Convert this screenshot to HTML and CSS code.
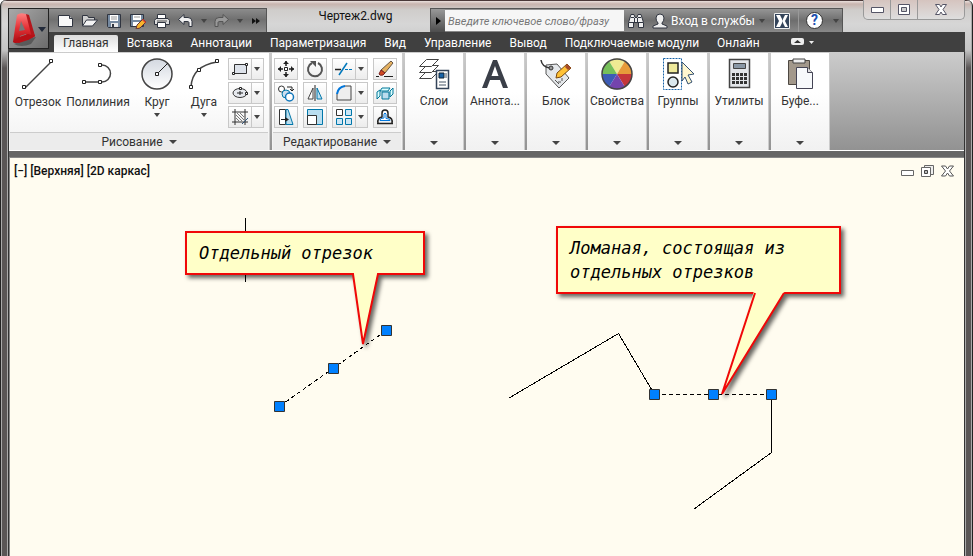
FILE: index.html
```
<!DOCTYPE html>
<html lang="ru">
<head>
    <meta charset="utf-8">
    <title>Чертеж2.dwg</title>
    <link rel="stylesheet" href="styles.css">
</head>
<body>
<div class="window">
    <!-- Title bar, application menu and tabs -->
    <header class="top">
        <button class="app-button" aria-label="Меню приложения">
            <svg width="39" height="38" viewBox="0 0 39 38">
                <defs>
                    <linearGradient id="red" x1="0" y1="0" x2="0" y2="1"><stop offset="0" stop-color="#ff8080"/><stop offset=".5" stop-color="#e33035"/><stop offset="1" stop-color="#a80c12"/></linearGradient>
                </defs>
                <path d="M5 34L16 29L27 27L22 34Q12 38 5 34Z" fill="#333" opacity=".5"/>
                <path d="M8 5Q11 2 17 4L26 26L19 30L17 24L11 26L10 32Q6 34 4 32Z" fill="url(#red)"/>
                <path d="M12 11L16 20L10 21Z" fill="#777"/>
                <path d="M17 4L20 5L26 26L23 28Z" fill="#b5161b"/>
                <path d="M4 32L10 27L19 24L26 26L19 30L10 33Z" fill="#b81016"/>
                <path d="M29 17h8l-4 5z" fill="#222a3a"/>
            </svg>
        </button>
        <div class="titlebar">
            <div class="quick-access">
                <button class="tool" aria-label="Создать"><svg width="18" height="16"><path d="M1.500 2.500h11l3 3v8h-14z" fill="#f8f8f8" stroke="#303540"/><path d="M12.500 2.500v3h3" fill="#bbb" stroke="#303540"/></svg></button>
                <button class="tool" aria-label="Открыть"><svg width="18" height="16"><path d="M1.500 13V2.500h5l1 2h6v3" fill="#d0d0d0" stroke="#303540"/><path d="M1.500 13l4-6h11l-5 6z" fill="#f4f4f4" stroke="#303540"/></svg></button>
                <button class="tool" aria-label="Сохранить"><svg width="16" height="16"><path d="M1.500 1.500h13v13h-12l-1-1z" fill="#7589a0" stroke="#303540"/><path d="M4 2h8v6H4z" fill="#fff"/><path d="M5 4h6M5 6h6" stroke="#999"/><path d="M5 10h7v4H5z" fill="#e8e8e8"/><path d="M6 11h2v3H6z" fill="#303540"/></svg></button>
                <button class="tool" aria-label="Сохранить как"><svg width="18" height="16"><path d="M1.500 1.500h13v12h-13z" fill="#7589a0" stroke="#303540"/><path d="M4 2h8v5H4zM4 9h6v4H4z" fill="#fff"/><path d="M5 4h6" stroke="#999"/><path d="M14 6l3 3-6 6-4 1 1-4z" fill="#f7b42c" stroke="#633"/><path d="M14 6l3 3-1 1-3-3z" fill="#d43"/></svg></button>
                <button class="tool" aria-label="Печать"><svg width="18" height="16"><path d="M4.500 6V1.500h8V6" fill="#fff" stroke="#303540"/><path d="M3 5.500h12l1.500 2v4h-15v-4z" fill="#ddd" stroke="#303540"/><path d="M4 8h10" stroke="#555"/><path d="M4.500 9.500h8v5h-8z" fill="#fff" stroke="#303540"/></svg></button>
                <button class="tool" aria-label="Отменить"><svg width="18" height="16"><path d="M1.500 6.500L7 1.500v3h4q4 0 4 4v5h-3v-4q0-1-2-1H7v3z" fill="#f0f0f0" stroke="#303540"/></svg></button>
                <button class="drop" aria-label="Список отмены"><svg width="6" height="4"><path d="M0 0h6l-3 4z" fill="#444"/></svg></button>
                <button class="tool" aria-label="Повторить"><svg width="18" height="16"><path d="M15.500 6.500L10 1.500v3H6q-4 0-4 4v5h3v-4q0-1 2-1h3v3z" fill="#999" stroke="#555"/></svg></button>
                <button class="drop" aria-label="Список повтора"><svg width="6" height="4"><path d="M0 0h6l-3 4z" fill="#444"/></svg></button>
                <button class="more" aria-label="Еще"><svg width="8" height="6"><path d="M0 0l4 3-4 3zM4 0l4 3-4 3z" fill="#111"/></svg></button>
            </div>
            <h1 class="doc-name">Чертеж2.dwg</h1>
            <form class="info-center">
                <button class="expand" type="button" aria-label="Развернуть"><svg width="5" height="8"><path d="M0 0l5 4-5 4z" fill="#000"/></svg></button>
                <input class="search" type="text" aria-label="Поиск" placeholder="Введите ключевое слово/фразу">
                <button class="tool" type="button" aria-label="Найти"><svg width="18" height="18"><path d="M4 2.500h3l1 3h2l1-3h3l2.500 8v5h-5v-5h-5v5h-5v-5z" fill="#eee" stroke="#303540"/><path d="M2 10.500h5M11 10.500h5M7.500 6v5M10.500 6v5M4 5.500h3M11 5.500h3" stroke="#303540"/></svg></button>
                <button class="tool" type="button" aria-label="Пользователь"><svg width="18" height="18"><path d="M9 2q4 0 4 4 0 3-2 5v1l5 2v2H2v-2l5-2v-1Q5 9 5 6q0-4 4-4z" fill="#eee" stroke="#303540"/></svg></button>
                <button class="sign-in" type="button">Вход в службы</button>
                <button class="drop wide" type="button" aria-label="Вход"><svg width="6" height="4"><path d="M0 0h6l-3 4z" fill="#444"/></svg></button>
                <button class="tool exchange" type="button" aria-label="Exchange"><svg width="18" height="18"><path d="M1.500 1.500h15v15h-15z" fill="#34445a" stroke="#eee"/><path d="M3 3h4l3 6-3 6H3l3-6zM15 3h-3l-2 4v4l2 4h3l-3-6z" fill="#fff"/></svg></button>
                <button class="tool help" type="button" aria-label="Справка"><span class="help-mark">?</span></button>
                <button class="drop" type="button" aria-label="Меню справки"><svg width="6" height="4"><path d="M0 0h6l-3 4z" fill="#444"/></svg></button>
            </form>
            <div class="win-controls">
                <button aria-label="Свернуть"><svg width="13" height="6"><path d="M.5.5h12v5H.5z" fill="#fff" stroke="#556"/></svg></button>
                <button aria-label="Развернуть окно"><svg width="12" height="11"><path d="M.5.5h11v10H.5z" fill="#fff" stroke="#556"/><path d="M3.500 3.500h5v4h-5z" fill="#ccc" stroke="#556"/></svg></button>
                <button class="close" aria-label="Закрыть"><svg width="12" height="11"><path d="M.5.5h4L6 3 7.500.5h4l-3.500 5 3.500 5h-4L6 8l-1.500 2.500h-4L4 5.500z" fill="#fff" stroke="#556"/></svg></button>
            </div>
        </div>
        <nav class="tabs">
            <a class="tab active" href="#">Главная</a>
            <a class="tab" href="#">Вставка</a>
            <a class="tab" href="#">Аннотации</a>
            <a class="tab" href="#">Параметризация</a>
            <a class="tab" href="#">Вид</a>
            <a class="tab" href="#">Управление</a>
            <a class="tab" href="#">Вывод</a>
            <a class="tab" href="#">Подключаемые модули</a>
            <a class="tab" href="#">Онлайн</a>
            <button class="minimize" aria-label="Свернуть ленту"><svg width="24" height="8"><rect x="0" y="0" width="13" height="7" rx="2" fill="#eee"/><path d="M3 5h7L6.500 2z" fill="#333"/><path d="M18 3h5l-2.500 3z" fill="#eee"/></svg></button>
        </nav>
    </header>

    <!-- Ribbon -->
    <main class="work">
        <div class="ribbon">
            <section class="panel">
                <div class="panel-body">
                    <button class="big line-tool"><svg width="32" height="32"><path d="M3 30L29 4" stroke="#444" stroke-width="1.500"/><path d="M.5 27.500h3v3h-3zM27.500 1.500h3v3h-3z" fill="#fff" stroke="#222"/></svg>Отрезок</button>
                    <button class="big poly-tool"><svg width="32" height="32"><path d="M2 24h16h2a8 8 0 0 0 0-17h-2" fill="none" stroke="#444" stroke-width="1.500"/><path d="M.5 22.500h3v3h-3zM16.500 22.500h3v3h-3zM16.500 5.500h3v3h-3z" fill="#fff" stroke="#222"/></svg>Полилиния</button>
                    <button class="big circle-tool"><svg width="32" height="32"><defs><linearGradient id="disc" x1="0" y1="0" x2="0" y2="1"><stop offset="0" stop-color="#d3d8e0"/><stop offset="1" stop-color="#fff"/></linearGradient></defs><circle cx="16" cy="16" r="15" fill="url(#disc)" stroke="#444" stroke-width="1.500"/><path d="M16 16L27 5" stroke="#222"/><path d="M14.500 14.500h3v3h-3z" fill="#fff" stroke="#222"/></svg>Круг<svg class="arrow" width="6" height="4"><path d="M0 0h6l-3 4z" fill="#444"/></svg></button>
                    <button class="big arc-tool"><svg width="32" height="32"><path d="M3 29Q4 8 29 4" fill="none" stroke="#444" stroke-width="1.500"/><path d="M1.500 27.500h3v3h-3zM9.500 10.500h3v3h-3zM27.500 1.500h3v3h-3z" fill="#fff" stroke="#222"/></svg>Дуга<svg class="arrow" width="6" height="4"><path d="M0 0h6l-3 4z" fill="#444"/></svg></button>
                    <div class="draw-tools">
                        <button class="small split" aria-label="Прямоугольник"><svg width="18" height="18"><path d="M3.500 4.500h12v9h-12z" fill="#dde2ea" stroke="#333"/><path d="M1.500 12.500h2v2h-2zM14.500 3.500h2v2h-2z" fill="#fff" stroke="#222"/></svg><i class="caret"></i></button>
                        <button class="small split" aria-label="Эллипс"><svg width="18" height="18"><ellipse cx="9" cy="9" rx="7" ry="4.500" fill="#e6e9ee" stroke="#333"/><path d="M6 9h6M9 7v4" stroke="#222"/><path d="M8.500 3.500h2v2h-2zM14.500 8.500h2v2h-2z" fill="#fff" stroke="#222"/></svg><i class="caret"></i></button>
                        <button class="small split" aria-label="Штриховка"><svg width="18" height="18"><path d="M4 1v16M14 1v16M1 4h16M1 14h16" stroke="#333"/><path d="M5 10l3 3M5 7l6 6M6 5l7 7M9 5l4 4" stroke="#777"/><path d="M11 16l6-6" stroke="#357" /></svg><i class="caret"></i></button>
                    </div>
                </div>
                <button class="panel-title">Рисование<i class="caret large"></i></button>
            </section>

            <section class="panel edit-panel">
                <div class="panel-body edit-tools">
                    <button class="small" aria-label="Перенести"><svg width="18" height="18"><path d="M9 1v5M9 12v5M1 9h5M12 9h5" stroke="#222" stroke-width="1.500"/><path d="M6 4l3-3 3 3zM6 14l3 3 3-3zM4 6L1 9l3 3zM14 6l3 3-3 3z" fill="#222"/><path d="M7.500 7.500h3v3h-3z" fill="#fff" stroke="#222"/></svg></button>
                    <button class="small" aria-label="Повернуть"><svg width="18" height="18"><path d="M6 3a7 7 0 1 0 6 0" fill="none" stroke="#555" stroke-width="2"/><path d="M4 1h6v6z" fill="#555"/></svg></button>
                    <button class="small split" aria-label="Обрезать"><svg width="18" height="18"><path d="M0 9.500h6" stroke="#222" stroke-width="1.500"/><path d="M10 9.500h8" stroke="#07b" stroke-dasharray="3 1"/><path d="M4 15l8-12" stroke="#07b" stroke-width="1.500"/></svg><i class="caret"></i></button>
                    <button class="small" aria-label="Стереть"><svg width="18" height="18"><path d="M0 16.500h3M8 16.500h9" stroke="#222"/><path d="M15 1l2 2-8 10-4-3z" fill="#e5b160" stroke="#654"/><path d="M5 10l4 3-2 2q-3 1-4-1z" fill="#d34a22" stroke="#722"/></svg></button>

                    <button class="small" aria-label="Копировать"><svg width="18" height="18"><circle cx="4.500" cy="5" r="3" fill="#fff" stroke="#333"/><circle cx="9" cy="10" r="4" fill="#cde" stroke="#07a"/><circle cx="12.500" cy="13" r="4" fill="#fff" stroke="#17b" stroke-width="1.500"/><path d="M10 3h5v4M13 5l2 2 2-2" fill="none" stroke="#222"/></svg></button>
                    <button class="small" aria-label="Зеркало"><svg width="18" height="18"><path d="M7 4v11H2z" fill="#fff" stroke="#444"/><path d="M11 4v11h5z" fill="#bde" stroke="#07a"/><path d="M9 1v16" stroke="#222"/></svg></button>
                    <button class="small split" aria-label="Сопряжение"><svg width="18" height="18"><path d="M2 16V10Q3 3 10 2h6v14z" fill="#eee" stroke="#444"/><path d="M2 10Q3 3 10 2" fill="none" stroke="#07d" stroke-width="2"/></svg><i class="caret"></i></button>
                    <button class="small" aria-label="Расчленить"><svg width="18" height="18"><path d="M6 8h7v7H6z" fill="#bde" stroke="#079"/><path d="M6 4h8l-2 3H4zM14 7l3-3v6l-3 3z" fill="#dff" stroke="#079"/><path d="M1 8l3-2v6l-3 3z" fill="#dff" stroke="#079"/></svg></button>

                    <button class="small" aria-label="Растянуть"><svg width="18" height="18"><path d="M2.500 1.500h6v15h-6z" fill="#fff" stroke="#333"/><path d="M9 1.500h2l5 15H9z" fill="#bde" stroke="#07a"/><path d="M4 11.500h5" stroke="#222"/><path d="M8 9l4 2.500L8 14z" fill="#222"/></svg></button>
                    <button class="small" aria-label="Масштаб"><svg width="18" height="18"><path d="M1.500 1.500h15v15h-15z" fill="#b9def0" stroke="#07a"/><path d="M1.500 7.500h9v9h-9z" fill="#fff" stroke="#333"/></svg></button>
                    <button class="small split" aria-label="Массив"><svg width="18" height="18"><path d="M1.500 1.500h6v6h-6z" fill="#fff" stroke="#333"/><path d="M10.500 1.500h6v6h-6zM1.500 10.500h6v6h-6zM10.500 10.500h6v6h-6z" fill="#cde6f5" stroke="#07a"/></svg><i class="caret"></i></button>
                    <button class="small" aria-label="Смещение"><svg width="18" height="18"><path d="M6 15.500H1M2 15q-1-5 4-6V5q0-3 3-3t3 3v4q5 1 4 6M1 15.500h16" fill="none" stroke="#222" stroke-width="1.500"/><path d="M4 12.500h10q0-2-4-2V6q-1-2-2 0v4q-4 0-4 2z" fill="#fff" stroke="#07d"/></svg></button>
                </div>
                <button class="panel-title">Редактирование<i class="caret large"></i></button>
            </section>

            <button class="panel slim"><svg width="32" height="32"><g fill="#fff" stroke="#444"><path d="M1.500 20.500l7-7h12l-7 7z"/><path d="M1.500 14.500l7-7h12l-7 7z"/><path d="M1.500 8.500l7-7h12l-7 7z"/><path d="M18.500 12.500h12v18h-12z" stroke="#34445a" stroke-width="1.500"/></g><path d="M21 15h5v5h-5z" fill="#1763a8" stroke="#123"/><path d="M28 15v5M21 24h7M21 27h7" stroke="#456"/></svg><span>Слои</span><i class="caret large"></i></button>
            <button class="panel slim"><svg width="32" height="32"><path d="M3 30L14 2h4l11 28h-5l-3-8H11l-3 8zM12.500 18h7L16 8z" fill="#3a3f48"/></svg><span>Аннота...</span><i class="caret large"></i></button>
            <button class="panel slim"><svg width="32" height="32"><path d="M6 7l11-1 12 14-10 10L6 16z" fill="#e5e8eb" stroke="#555"/><path d="M1 2q1 7 9 8" fill="none" stroke="#333" stroke-width="1.500"/><circle cx="11" cy="10" r="2" fill="#999" stroke="#333"/><path d="M15 22l4 4M18 24h3M22 20v3" stroke="#555"/><path d="M27 6l4 4-10 9-5 1 1-5z" fill="#ffc236" stroke="#7a4a10"/><path d="M27 6l4 4-3 2-3-3z" fill="#a54b2a"/></svg><span>Блок</span><i class="caret large"></i></button>
            <button class="panel slim"><svg width="32" height="32"><path d="M16 16L8 3a15 15 0 0 1 16 0z" fill="#efea93"/><path d="M16 16l8-13a15 15 0 0 1 7 13z" fill="#e79b3a"/><path d="M16 16h15a15 15 0 0 1-7 13z" fill="#c5353a"/><path d="M16 16l8 13a15 15 0 0 1-16 0z" fill="#7444ad"/><path d="M16 16L8 29a15 15 0 0 1-7-13z" fill="#3c5cb6"/><path d="M16 16H1A15 15 0 0 1 8 3z" fill="#76bf5a"/><circle cx="16" cy="16" r="15" fill="none" stroke="#444" stroke-width="1.500"/></svg><span>Свойства</span><i class="caret large"></i></button>
            <button class="panel slim"><svg width="34" height="32"><path d="M2.500.5h18v31h-18z" fill="none" stroke="#1763a8" stroke-dasharray="2 1"/><path d="M7 5h10v10H7z" fill="#efe99a" stroke="#222" stroke-width="1.500"/><circle cx="12" cy="24" r="5" fill="#dbe8ee" stroke="#222" stroke-width="1.500"/><path d="M21 4l12 12-6 1 4 7-4 2-3-7-3 4z" fill="#fff7cf" stroke="#335070"/></svg><span>Группы</span><i class="caret large"></i></button>
            <button class="panel slim"><svg width="32" height="32"><path d="M6.500 1.500h20v28h-20z" fill="#e3e6ea" stroke="#444" stroke-width="1.500"/><path d="M10.500 5.500h12v5h-12z" fill="#8997a5" stroke="#444"/><path d="M9 16.500h15M9 20.500h15M9 24.500h15" stroke="#333" stroke-width="3" stroke-dasharray="3 1"/></svg><span>Утилиты</span><i class="caret large"></i></button>
            <button class="panel slim"><svg width="32" height="32"><path d="M4.500 2.500h21v24h-21z" fill="#a2988b" stroke="#4d4842"/><path d="M9 1h12v4H9z" fill="#eee" stroke="#444"/><path d="M12.500 9.500h11l5 5v16h-16z" fill="#f7f9fb" stroke="#445"/><path d="M23.500 9.500v5h5" fill="#ddd" stroke="#445"/></svg><span>Буфе...</span><i class="caret large"></i></button>
        </div>

        <!-- Drawing area -->
        <section class="canvas">
            <div class="view-bar">
                <div class="view-label"><button>[&minus;]</button><button>[Верхняя]</button><button>[2D каркас]</button></div>
                <div class="view-controls">
                    <button aria-label="Свернуть вид"><svg width="13" height="12"><path d="M.5 5.500h12v5H.5z" fill="#fff" stroke="#666"/></svg></button>
                    <button aria-label="Развернуть вид"><svg width="13" height="12"><path d="M3.500.5h9v9h-9z" fill="#eee" stroke="#666"/><path d="M.5 2.500h9v9h-9z" fill="#fff" stroke="#666"/><path d="M3.500 5.500h3v3h-3z" fill="#bbb" stroke="#444"/></svg></button>
                    <button aria-label="Закрыть вид"><svg width="13" height="12"><path d="M.5 1h4l2 3 2-3h4l-4 5 4 5h-4l-2-3-2 3h-4l4-5z" fill="#fff" stroke="#555"/></svg></button>
                </div>
            </div>
            <svg class="drawing" width="953" height="398" viewBox="10 158 953 398">
                <g fill="none" stroke="#000" shape-rendering="crispEdges">
                    <path d="M245.500 218v64"/>
                    <path d="M509 398L618.500 333.500 654.500 394.500"/>
                    <path d="M771.500 394v58.500L694 509"/>
                    <path d="M280 406L387 330M655 394.500h117" stroke-dasharray="4 3"/>
                </g>
            </svg>
            <div class="callout callout-single">
                Отдельный отрезок
                <svg class="tail" width="40" height="75"><path d="M6 0L16 72 31 0z" fill="#ffffc8"/><path d="M5 2h1L16 72 31 2h1" fill="none" stroke="#f00808" stroke-width="2"/></svg>
            </div>
            <div class="callout callout-multi">
                Ломаная, состоящая из<br>отдельных отрезков
                <svg class="tail" width="72" height="106"><path d="M36 0L4 103 67 0z" fill="#ffffc8"/><path d="M37 2L4 103 66 2" fill="none" stroke="#f00808" stroke-width="2"/></svg>
            </div>
            <svg class="drawing" width="953" height="398" viewBox="10 158 953 398">
                <g fill="#0080ff" stroke="#333">
                    <path d="M274.500 401.500h10v10h-10zM328.500 363.500h10v10h-10zM381.500 325.500h10v10h-10z"/>
                    <path d="M649.500 389.500h10v10h-10zM708.500 389.500h10v10h-10zM766.500 389.500h10v10h-10z"/>
                </g>
            </svg>
        </section>
    </main>
</div>
</body>
</html>
```
FILE: styles.css
```
* {
    box-sizing: border-box;
}

body {
    margin: 0;
    font-family: Roboto, "Open Sans", sans-serif;
    font-size: 12px;
    color: #333;
}

button {
    font: inherit;
    color: inherit;
    background: none;
    border: none;
    padding: 0;
    display: flex;
    align-items: center;
    justify-content: center;
}

svg {
    display: block;
    flex: none;
}

/* Window frame */
.window {
    min-height: 100vh;
    display: flex;
    flex-direction: column;
    padding: 0 7px;
    background: linear-gradient(#4a3838 0, #4a3838 1px, #eadfdc 1px, #c8b4ae 4px, #cfcdcb 10px, #d6d6d6 24px, #c4c4c4 50px, #5a5656 68px);
    border-left: 1px solid #222;
    border-right: 1px solid #222;
    border-radius: 6px 6px 0 0;
    box-shadow: inset 1px 0 0 #aaa, inset -1px 0 0 #aaa;
}

/* Title bar */
.top {
    display: grid;
    grid-template-columns: 41px 1fr;
    grid-template-rows: 32px 20px;
}

.app-button {
    grid-row: 1 / 3;
    margin-top: 8px;
    height: 41px;
    border: 1px solid #222;
    background: linear-gradient(135deg, #a8a8a8, #8a8a8a 50%, #6c6c6c);
    z-index: 1;
}

.titlebar {
    display: flex;
    align-items: flex-start;
}

.quick-access {
    display: flex;
    height: 24px;
    margin-top: 8px;
    padding-left: 5px;
    border: 1px solid #555;
    border-width: 1px 1px 0 0;
    background: linear-gradient(#8c8c8c, #707070 45%, #8e8e8e);
}

.tool {
    width: 24px;
}

.drop {
    width: 12px;
}

.drop.wide {
    width: 16px;
}

.more {
    width: 20px;
}

.doc-name {
    flex: 1;
    margin: 8px 0 0;
    padding-left: 14px;
    font-size: 12px;
    font-weight: normal;
    line-height: 16px;
    text-align: center;
    white-space: nowrap;
    color: #111;
}

.info-center {
    display: flex;
    height: 24px;
    margin: 8px 20px 0 0;
    border: 1px solid #555;
    border-bottom: none;
    background: linear-gradient(#959595, #6e6e6e 50%, #888);
}

.expand {
    width: 14px;
    background: linear-gradient(#999, #4d4d4d);
}

.search {
    width: 179px;
    height: 21px;
    margin-top: 1px;
    border: none;
    background: #f6f6f6;
    padding: 2px 3px 0;
    font: italic 11px Roboto, "Open Sans", sans-serif;
}

.search::placeholder {
    color: #777;
}

.sign-in {
    width: 82px;
    color: #fff;
    white-space: nowrap;
}

.exchange {
    margin-right: 4px;
}

.help {
    border-left: 1px solid #999;
    width: 32px;
}

.help-mark {
    width: 17px;
    height: 17px;
    border: 1px solid #333;
    border-radius: 50%;
    background: #fff;
    color: #1c4fb0;
    font-size: 14px;
    font-weight: bold;
    line-height: 15px;
}

.win-controls {
    display: flex;
    height: 20px;
    border: 1px solid #999;
    border-top: none;
    border-radius: 0 0 5px 5px;
    background: linear-gradient(#d5c4bf, #dedede);
}

.win-controls button {
    width: 27px;
    border-right: 1px solid #999;
}

.win-controls .close {
    width: 46px;
    border-right: none;
}

/* Ribbon tabs */
.tabs {
    display: flex;
    margin-left: -41px;
    grid-column: 2;
    padding-left: 46px;
    background: #404040;
}

.tab {
    padding: 3px 9px 0;
    color: #fff;
    line-height: 16px;
    text-decoration: none;
    white-space: nowrap;
}

.tab.active {
    margin-top: 3px;
    padding-top: 0;
    border-radius: 2px 2px 0 0;
    background: linear-gradient(#dcdcdc, #fff);
    color: #333;
}

.minimize {
    margin-left: 22px;
}

/* Ribbon panels */
.work {
    flex: 1;
    display: flex;
    flex-direction: column;
    border-left: 1px solid #333;
    border-right: 1px solid #333;
    box-shadow: -1px 0 0 #aaa, 1px 0 0 #aaa;
}

.ribbon {
    display: flex;
    gap: 2px;
    height: 99px;
    padding-top: 1px;
    border-bottom: 1px solid #fff;
    background: linear-gradient(#ccc, #929292);
}

.panel {
    display: flex;
    flex-direction: column;
    background: linear-gradient(#fff 40%, #f1f1f1);
    border-right: 1px solid #ccc;
}

.panel-body {
    flex: 1;
    display: flex;
    padding: 5px 5px 0;
}

.panel-title {
    height: 18px;
    margin: 0 1px;
    gap: 6px;
    border-top: 1px solid #ccc;
    background: #ececec;
}

.big {
    flex-direction: column;
    justify-content: flex-start;
    line-height: 16px;
    gap: 4px;
}

.big .arrow {
    margin-top: -1px;
}

.line-tool {
    width: 48px;
}

.poly-tool {
    width: 72px;
}

.circle-tool {
    width: 46px;
}

.arc-tool {
    width: 48px;
}

.draw-tools {
    display: grid;
    align-content: start;
    gap: 2px;
}

.edit-tools {
    display: grid;
    grid-template-columns: 24px 24px 36px 24px;
    align-content: start;
    gap: 2px 5px;
    padding: 5px 5px 0 2px;
}

.small {
    height: 22px;
    border: 1px solid #c8c8c8;
    background: linear-gradient(#fff, #ececec);
}

.split {
    width: 36px;
    justify-content: space-between;
    padding: 0 3px 0 2px;
    background: linear-gradient(#c8c8c8, #c8c8c8) 22px 0 / 1px 100% no-repeat, linear-gradient(#fff, #ececec);
}

.caret {
    border: 3px solid transparent;
    border-top: 4px solid #444;
    border-bottom: none;
}

.caret.large {
    border-width: 4px 4px 0;
}

.slim {
    width: 59px;
    padding: 5px 0 5px;
    justify-content: flex-start;
    line-height: 16px;
    white-space: nowrap;
}

.slim span {
    margin: 3px 0 auto;
}

/* Drawing area */
.canvas {
    flex: 1;
    position: relative;
    overflow: hidden;
    border-top: 6px solid #666;
    background: #fffcf0;
    box-shadow: inset 1px 1px 0 #888;
}

.view-bar {
    display: flex;
    justify-content: space-between;
    padding: 6px 10px 0 5px;
}

.view-label {
    display: flex;
    gap: 3px;
    font-weight: 500;
    line-height: 16px;
    color: #111;
}

.view-controls {
    display: flex;
    gap: 7px;
}

.drawing {
    position: absolute;
    top: 1px;
    left: 1px;
}

.callout {
    position: absolute;
    padding: 8px 12px;
    border: 2px solid #f00808;
    background: #ffffc8;
    filter: drop-shadow(3px 3px 2px rgba(0, 0, 0, 0.6));
    font: italic 17px/24px "DejaVu Sans Mono", monospace;
    color: #000;
    white-space: nowrap;
}

.callout-single {
    left: 176px;
    top: 74px;
    width: 240px;
}

.callout-multi {
    left: 547px;
    top: 69px;
    width: 285px;
}

.tail {
    position: absolute;
    top: 100%;
    left: 160px;
    margin-top: -1px;
}
```
